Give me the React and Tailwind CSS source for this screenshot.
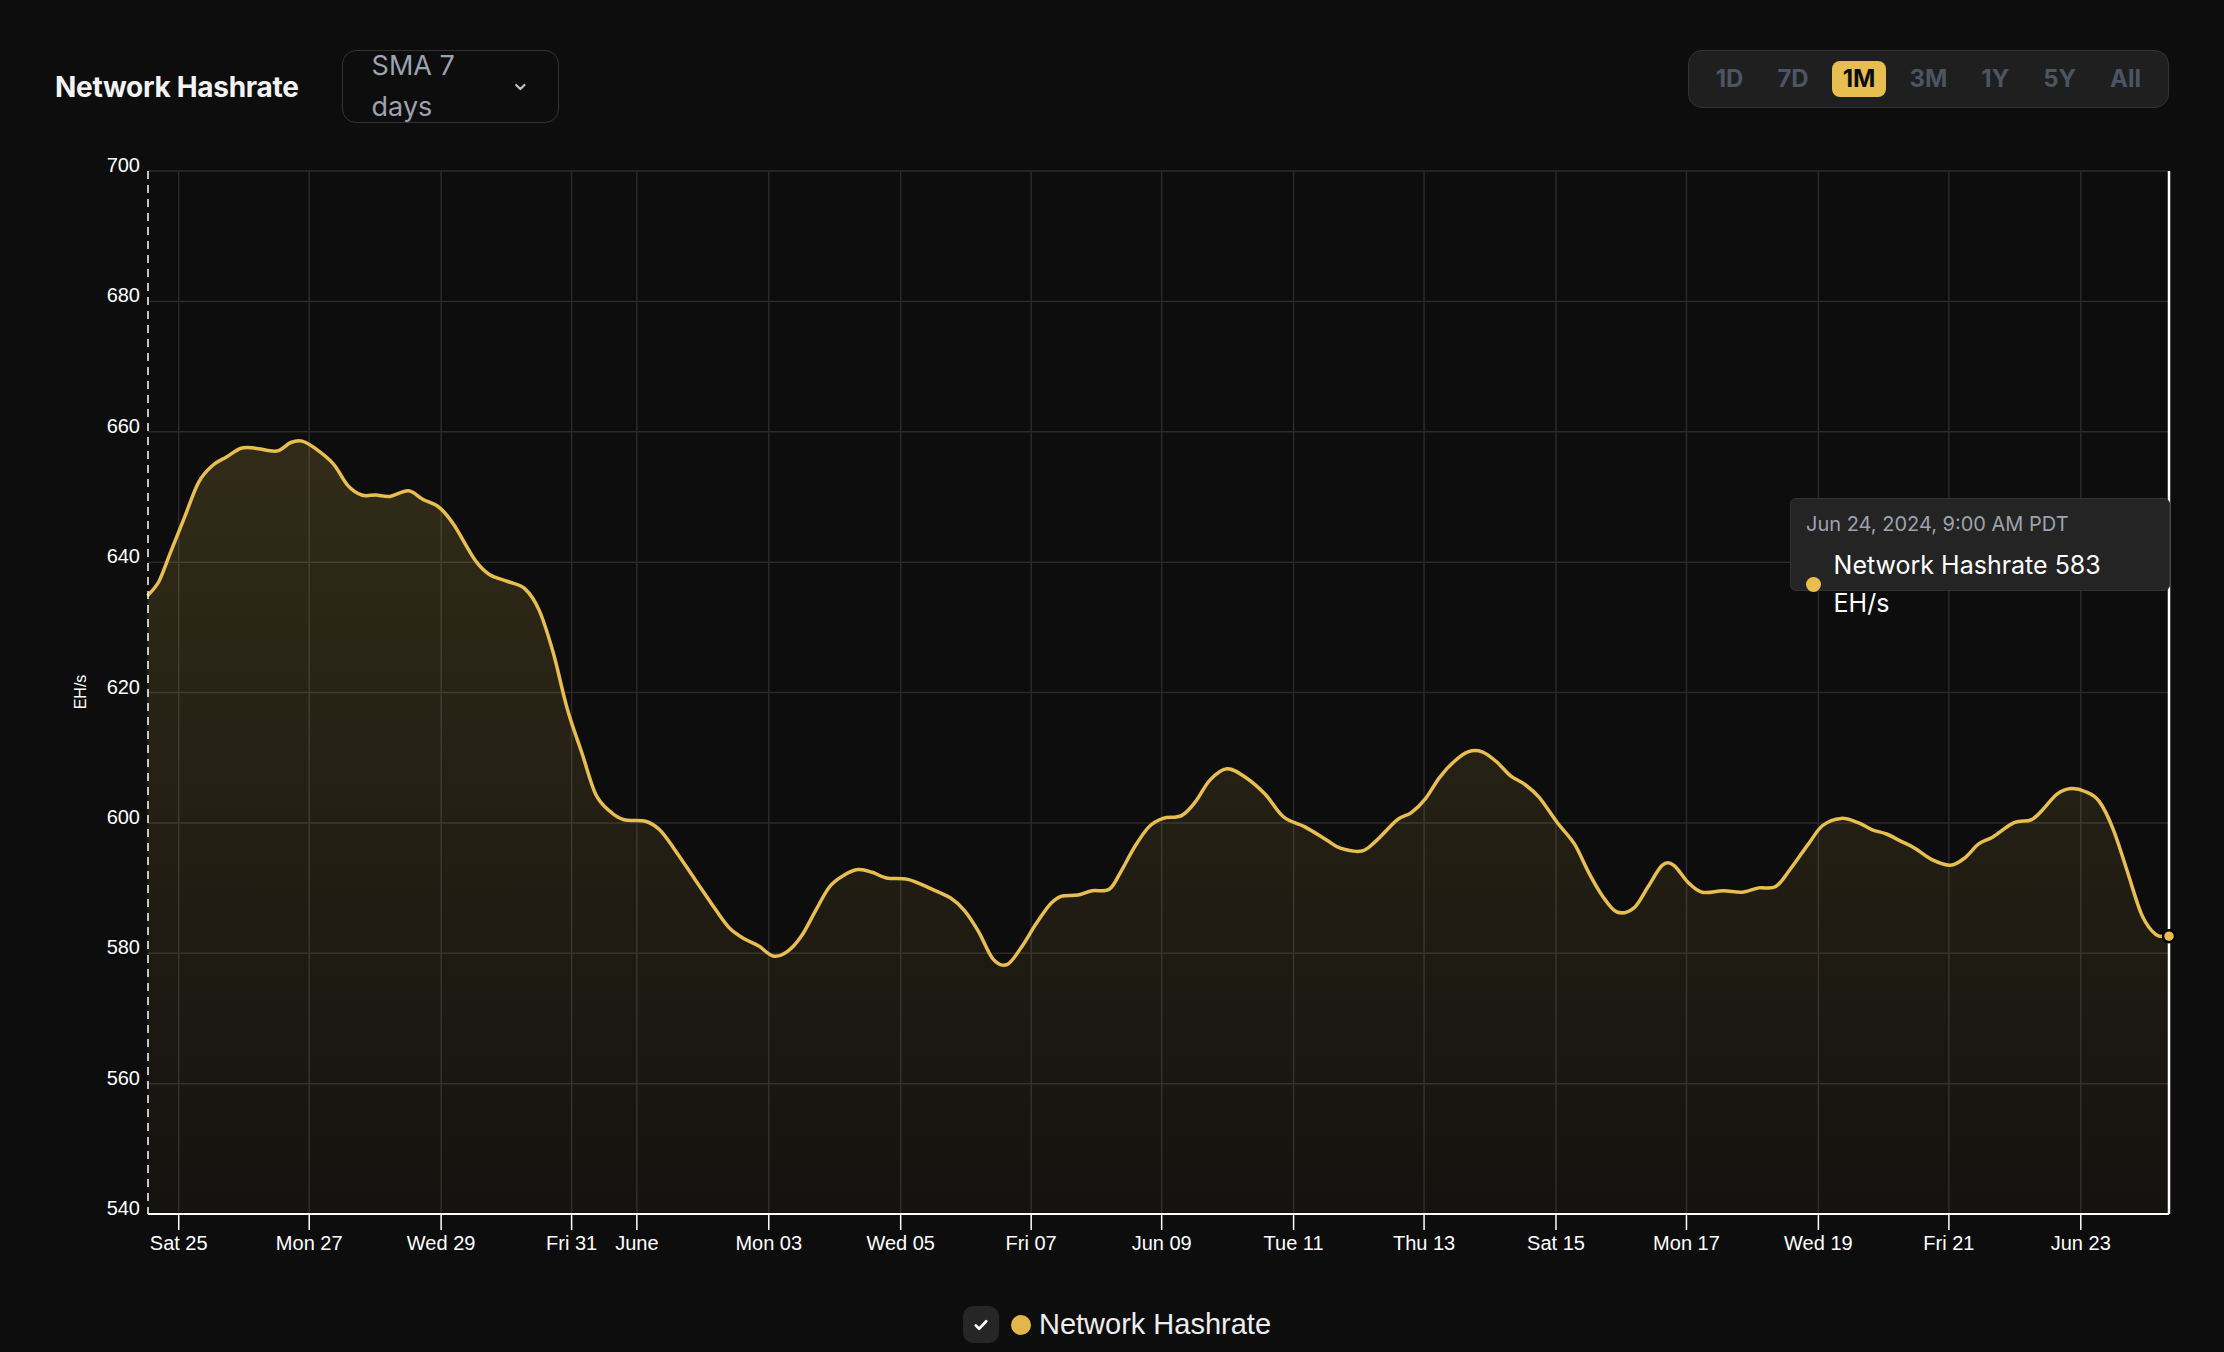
import React from 'react';

const S = 1.4184;
const raw = [
  [104,420],[112,410],[120,390],[130,365],[140,340],[150,328],[160,322],[170,316],[180,316],[195,318],[205,312],[213,311],[222,316],[235,327],[245,342],[255,349],[265,349],[275,350],[288,346],[298,352],[310,358],[320,370],[335,395],[345,405],[358,410],[370,415],[380,430],[390,460],[400,500],[410,530],[420,560],[430,572],[440,578],[455,579],[465,585],[475,598],[490,620],[505,642],[515,655],[525,662],[535,667],[545,674],[555,671],[565,660],[575,642],[585,625],[595,617],[605,613],[615,615],[625,619],[640,620],[655,626],[670,633],[680,642],[690,657],[700,676],[710,680],[720,668],[730,652],[740,638],[748,632],[760,631],[770,628],[782,627],[790,615],[800,597],[810,583],[820,577],[833,575],[843,565],[853,550],[865,542],[878,548],[892,560],[905,576],[920,583],[935,592],[945,598],[960,600],[970,593],[985,578],[995,573],[1005,563],[1015,548],[1025,537],[1035,530],[1045,530],[1055,537],[1065,547],[1075,553],[1085,562],[1098,580],[1110,595],[1120,615],[1130,632],[1140,643],[1152,640],[1162,625],[1172,610],[1180,610],[1190,622],[1200,629],[1215,628],[1228,629],[1240,626],[1252,625],[1262,613],[1275,595],[1285,582],[1298,577],[1310,580],[1320,585],[1330,588],[1340,593],[1350,598],[1362,606],[1375,610],[1385,605],[1395,595],[1405,590],[1420,580],[1432,578],[1440,571],[1450,560],[1460,556],[1470,558],[1480,565],[1490,585],[1500,615],[1510,645],[1520,659],[1529,660],
];
const pts = raw.map(([x, y]) => [x * S, y * S]);

function smoothPath(p) {
  let d = `M${p[0][0].toFixed(1)},${p[0][1].toFixed(1)}`;
  for (let i = 0; i < p.length - 1; i++) {
    const p0 = p[i - 1] || p[i], p1 = p[i], p2 = p[i + 1], p3 = p[i + 2] || p2;
    const c1 = [p1[0] + (p2[0] - p0[0]) / 6, p1[1] + (p2[1] - p0[1]) / 6];
    const c2 = [p2[0] - (p3[0] - p1[0]) / 6, p2[1] - (p3[1] - p1[1]) / 6];
    d += ` C${c1[0].toFixed(1)},${c1[1].toFixed(1)} ${c2[0].toFixed(1)},${c2[1].toFixed(1)} ${p2[0].toFixed(1)},${p2[1].toFixed(1)}`;
  }
  return d;
}

const L = 148, R = 2169, T = 171, B = 1214;
const yLabels = [700, 680, 660, 640, 620, 600, 580, 560, 540];
const xTicks = [
  [126, 'Sat 25'], [218, 'Mon 27'], [311, 'Wed 29'], [403, 'Fri 31'], [449, 'June'], [542, 'Mon 03'], [635, 'Wed 05'],
  [727, 'Fri 07'], [819, 'Jun 09'], [912, 'Tue 11'], [1004, 'Thu 13'], [1097, 'Sat 15'], [1189, 'Mon 17'],
  [1282, 'Wed 19'], [1374, 'Fri 21'], [1467, 'Jun 23'],
];
const ranges = ['1D', '7D', '1M', '3M', '1Y', '5Y', 'All'];

function Chart() {
  const line = smoothPath(pts);
  const last = pts[pts.length - 1];
  const area = `${line} L${last[0]},${B} L${pts[0][0]},${B} Z`;
  const axisFont = { fontFamily: '"Liberation Sans", Arial, sans-serif' };
  return (
    <svg width="2224" height="1180" viewBox="0 123 2224 1180" className="block">
      <defs>
        <linearGradient id="fill" x1="0" y1="0" x2="0" y2="1">
          <stop offset="0%" stopColor="#e8be50" stopOpacity="0.17" />
          <stop offset="100%" stopColor="#e8be50" stopOpacity="0.03" />
        </linearGradient>
      </defs>
      {yLabels.map((v, i) => {
        const y = T + i * ((B - T) / 8);
        return (
          <g key={v}>
            {i < 8 && <line x1={L} x2={R} y1={y} y2={y} stroke="#2a2a2a" strokeWidth="1.5" />}
            <text x={L - 8} y={y + 1} textAnchor="end" fill="#fff" fontSize="20" style={axisFont}>{v}</text>
          </g>
        );
      })}
      {xTicks.map(([x, t]) => {
        const X = x * S;
        return (
          <g key={t}>
            <line x1={X} x2={X} y1={T} y2={B} stroke="#2a2a2a" strokeWidth="1.5" />
            <line x1={X} x2={X} y1={B} y2={B + 16} stroke="#fff" strokeWidth="1.5" />
            <text x={X} y={B + 36} textAnchor="middle" fill="#fff" fontSize="20" style={axisFont}>{t}</text>
          </g>
        );
      })}
      <path d={area} fill="url(#fill)" />
      <path d={line} fill="none" stroke="#e8be50" strokeWidth="3.5" strokeLinejoin="round" />
      <line x1={L} x2={L} y1={T} y2={B} stroke="#fff" strokeWidth="1.5" strokeDasharray="8 6" />
      <line x1={L} x2={R} y1={B} y2={B} stroke="#fff" strokeWidth="2" />
      <line x1={R} x2={R} y1={T} y2={B} stroke="#fff" strokeWidth="2.5" />
      <circle cx={R} cy={last[1]} r="6" fill="#e8be50" stroke="#000" strokeWidth="2.5" />
      <text x="86" y="692" transform="rotate(-90 86 692)" textAnchor="middle" fill="#fff" fontSize="16" style={axisFont}>EH/s</text>
    </svg>
  );
}

export default function App() {
  return (
    <div className="relative w-[2224px] h-[1352px] overflow-hidden bg-[#0d0d0d] text-white" style={{ fontFamily: 'Inter, "Liberation Sans", sans-serif' }}>
      <div className="flex items-center justify-between pt-[50px] pl-[55px] pr-[55px] h-[123px]">
        <div className="flex items-center">
          <h1 className="text-[28px] font-bold tracking-[-0.3px] text-[#f3f3f3]">Network Hashrate</h1>
          <div className="ml-[43px] flex items-center justify-between w-[217px] h-[73px] rounded-[14px] border border-[#333] px-[29px]">
            <span className="text-[27px] text-[#9ca3af]">SMA 7 days</span>
            <svg width="18" height="18" viewBox="0 0 24 24" fill="none" stroke="#c0c4cc" strokeWidth="3" strokeLinecap="round" strokeLinejoin="round"><path d="m6 9 6 6 6-6" /></svg>
          </div>
        </div>
        <div className="flex items-center self-start h-[58px] rounded-[14px] border border-[#333] bg-[#1f1f1f] px-[16px] gap-[12px]">
          {ranges.map((r) => (
            <span key={r} className={`px-[11px] h-[36px] flex items-center rounded-[8px] text-[24px] font-bold ${r === '1M' ? 'bg-[#e8be50] text-[#0d0d0d]' : 'text-[#4b5563]'}`}>{r}</span>
          ))}
        </div>
      </div>
      <Chart />
      <div className="flex items-center justify-center gap-[12px] pl-[10px]">
        <div className="w-[36px] h-[37px] rounded-[10px] bg-[#262626] flex items-center justify-center">
          <svg width="18" height="18" viewBox="0 0 24 24" fill="none" stroke="#fff" strokeWidth="3.5" strokeLinecap="round" strokeLinejoin="round"><path d="M5 12.5l4.5 4.5L19 7" /></svg>
        </div>
        <span className="w-[20px] h-[20px] rounded-full bg-[#e2b64c]" />
        <span className="text-[29px] text-[#eee] -ml-[4px]" style={{ fontFamily: '"Liberation Sans", Arial, sans-serif' }}>Network Hashrate</span>
      </div>
      <div className="absolute left-[1790px] top-[498px] w-[380px] h-[93px] rounded-[6px] bg-[#242424] border border-[#333] px-[15px] pt-[10px]">
        <div className="text-[20px] text-[#9ca3af]">Jun 24, 2024, 9:00 AM PDT</div>
        <div className="flex items-center gap-[13px] mt-[8px]">
          <span className="w-[15px] h-[15px] rounded-full bg-[#e8be50]" />
          <span className="text-[25px] text-white">Network Hashrate 583 EH/s</span>
        </div>
      </div>
    </div>
  );
}
